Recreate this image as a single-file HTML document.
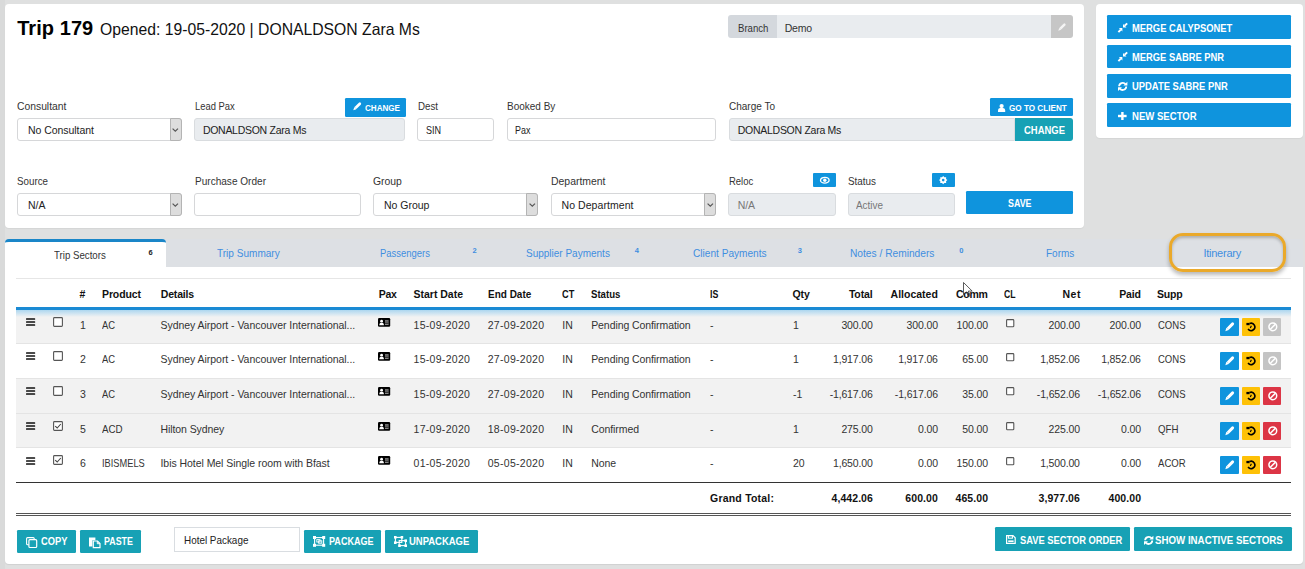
<!DOCTYPE html>
<html><head><meta charset="utf-8">
<style>
html,body{margin:0;padding:0;}
body{width:1305px;height:569px;overflow:hidden;position:relative;background:#dfe0e0;font-family:"Liberation Sans",sans-serif;}
div{position:absolute;}
.t{position:absolute;white-space:nowrap;line-height:1;}
svg{position:absolute;overflow:visible;}
</style></head><body>
<div style="left:0.00px;top:0.00px;width:4.50px;height:569.00px;background:#d9dada"></div>
<div style="left:5.00px;top:4.00px;width:1079.20px;height:223.60px;background:#fff;border-radius:4px;box-shadow:0 1px 1px rgba(0,0,0,.05)"></div>
<div style="left:1096.00px;top:4.00px;width:206.60px;height:133.80px;background:#fff;border-radius:4px;box-shadow:0 1px 1px rgba(0,0,0,.05)"></div>
<div style="left:5.00px;top:239.00px;width:1298.00px;height:28.00px;background:#dde0e4"></div>
<div style="left:5.00px;top:266.50px;width:1298.00px;height:297.30px;background:#fff;border-radius:0 0 4px 4px;box-shadow:0 1px 1px rgba(0,0,0,.07)"></div>
<div style="left:5.00px;top:239.00px;width:161.00px;height:28.00px;background:#fff;border-top:3px solid #1a86c8;border-radius:4px 4px 0 0;box-sizing:border-box"></div>
<span class="t" style="left:17.20px;top:18.07px;font-size:20px;font-weight:bold;color:#000;letter-spacing:0.057px;">Trip 179</span>
<span class="t" style="left:99.70px;top:21.03px;font-size:16.5px;font-weight:normal;color:#111;transform:scaleX(0.9536);transform-origin:0 0;">Opened: 19-05-2020 | DONALDSON Zara Ms</span>
<div style="left:728.30px;top:15.20px;width:48.30px;height:23.10px;background:#d4d8dd;border-radius:3px 0 0 3px"></div>
<div style="left:776.60px;top:15.20px;width:274.00px;height:23.10px;background:#e9ecef"></div>
<div style="left:1050.60px;top:15.20px;width:22.10px;height:23.10px;background:#c6c6c6;border-radius:0 3px 3px 0"></div>
<span class="t" style="left:737.90px;top:22.51px;font-size:10.5px;font-weight:normal;color:#333;transform:scaleX(0.9133);transform-origin:0 0;">Branch</span>
<span class="t" style="left:784.80px;top:22.51px;font-size:10.5px;font-weight:normal;color:#333;letter-spacing:-0.278px;">Demo</span>
<span class="t" style="left:16.60px;top:100.89px;font-size:11px;font-weight:normal;color:#333;transform:scaleX(0.9395);transform-origin:0 0;">Consultant</span>
<div style="left:16.60px;top:118.00px;width:165.90px;height:23.20px;background:#fff;border:1px solid #d6d7d9;border-radius:3px;box-sizing:border-box"></div>
<div style="left:169.60px;top:118.00px;width:12.90px;height:23.20px;background:#dddddd;border:1px solid #b4b4b4;border-radius:0 3px 3px 0;box-sizing:border-box"></div>
<span class="t" style="left:28.00px;top:124.91px;font-size:10.5px;font-weight:normal;color:#222;letter-spacing:-0.051px;">No Consultant</span>
<span class="t" style="left:194.80px;top:100.89px;font-size:11px;font-weight:normal;color:#333;transform:scaleX(0.8542);transform-origin:0 0;">Lead Pax</span>
<div style="left:345.30px;top:97.50px;width:60.50px;height:19.10px;background:#0f94dd;border-radius:1.3px"></div>
<span class="t" style="left:364.60px;top:103.68px;font-size:9px;font-weight:bold;color:#fff;transform:scaleX(0.8971);transform-origin:0 0;">CHANGE</span>
<div style="left:194.00px;top:118.00px;width:211.40px;height:23.20px;background:#e9ecef;border:1px solid #d9dcdf;border-radius:3px;box-sizing:border-box"></div>
<span class="t" style="left:202.90px;top:124.91px;font-size:10.5px;font-weight:normal;color:#222;letter-spacing:-0.278px;">DONALDSON Zara Ms</span>
<span class="t" style="left:417.70px;top:100.89px;font-size:11px;font-weight:normal;color:#333;transform:scaleX(0.8848);transform-origin:0 0;">Dest</span>
<div style="left:417.40px;top:118.30px;width:77.10px;height:22.80px;background:#fff;border:1px solid #d6d7d9;border-radius:3px;box-sizing:border-box"></div>
<span class="t" style="left:425.60px;top:124.91px;font-size:10.5px;font-weight:normal;color:#222;transform:scaleX(0.8580);transform-origin:0 0;">SIN</span>
<span class="t" style="left:506.60px;top:100.89px;font-size:11px;font-weight:normal;color:#333;transform:scaleX(0.9082);transform-origin:0 0;">Booked By</span>
<div style="left:506.60px;top:118.00px;width:209.40px;height:23.20px;background:#fff;border:1px solid #d6d7d9;border-radius:3px;box-sizing:border-box"></div>
<span class="t" style="left:514.80px;top:124.91px;font-size:10.5px;font-weight:normal;color:#222;transform:scaleX(0.8502);transform-origin:0 0;">Pax</span>
<span class="t" style="left:728.50px;top:100.89px;font-size:11px;font-weight:normal;color:#333;transform:scaleX(0.9101);transform-origin:0 0;">Charge To</span>
<div style="left:989.50px;top:97.70px;width:83.50px;height:18.60px;background:#0f94dd;border-radius:1.3px"></div>
<span class="t" style="left:1009.00px;top:103.68px;font-size:9px;font-weight:bold;color:#fff;transform:scaleX(0.9052);transform-origin:0 0;">GO TO CLIENT</span>
<div style="left:728.50px;top:118.00px;width:286.50px;height:23.20px;background:#e9ecef;border:1px solid #d9dcdf;border-radius:3px;box-sizing:border-box;border-radius:3px 0 0 3px"></div>
<div style="left:1014.80px;top:118.00px;width:58.20px;height:23.20px;background:#17a1b5;border-radius:0 3px 3px 0"></div>
<span class="t" style="left:737.80px;top:124.91px;font-size:10.5px;font-weight:normal;color:#222;letter-spacing:-0.277px;">DONALDSON Zara Ms</span>
<span class="t" style="left:1023.50px;top:126.37px;font-size:10.2px;font-weight:bold;color:#fff;transform:scaleX(0.9272);transform-origin:0 0;">CHANGE</span>
<span class="t" style="left:16.60px;top:175.99px;font-size:11px;font-weight:normal;color:#333;transform:scaleX(0.8890);transform-origin:0 0;">Source</span>
<div style="left:16.60px;top:193.00px;width:165.90px;height:23.40px;background:#fff;border:1px solid #d6d7d9;border-radius:3px;box-sizing:border-box"></div>
<div style="left:169.60px;top:193.00px;width:12.90px;height:23.40px;background:#dddddd;border:1px solid #b4b4b4;border-radius:0 3px 3px 0;box-sizing:border-box"></div>
<span class="t" style="left:28.00px;top:199.91px;font-size:10.5px;font-weight:normal;color:#222;letter-spacing:-0.018px;">N/A</span>
<span class="t" style="left:194.80px;top:175.99px;font-size:11px;font-weight:normal;color:#333;transform:scaleX(0.9142);transform-origin:0 0;">Purchase Order</span>
<div style="left:194.00px;top:193.00px;width:166.80px;height:23.40px;background:#fff;border:1px solid #d6d7d9;border-radius:3px;box-sizing:border-box"></div>
<span class="t" style="left:372.90px;top:175.99px;font-size:11px;font-weight:normal;color:#333;transform:scaleX(0.9451);transform-origin:0 0;">Group</span>
<div style="left:373.30px;top:193.00px;width:165.10px;height:23.40px;background:#fff;border:1px solid #d6d7d9;border-radius:3px;box-sizing:border-box"></div>
<div style="left:526.30px;top:193.00px;width:12.10px;height:23.40px;background:#dddddd;border:1px solid #b4b4b4;border-radius:0 3px 3px 0;box-sizing:border-box"></div>
<span class="t" style="left:384.00px;top:199.91px;font-size:10.5px;font-weight:normal;color:#222;letter-spacing:-0.017px;">No Group</span>
<span class="t" style="left:551.00px;top:175.99px;font-size:11px;font-weight:normal;color:#333;transform:scaleX(0.9482);transform-origin:0 0;">Department</span>
<div style="left:551.00px;top:193.00px;width:165.00px;height:23.40px;background:#fff;border:1px solid #d6d7d9;border-radius:3px;box-sizing:border-box"></div>
<div style="left:703.50px;top:193.00px;width:12.50px;height:23.40px;background:#dddddd;border:1px solid #b4b4b4;border-radius:0 3px 3px 0;box-sizing:border-box"></div>
<span class="t" style="left:561.50px;top:199.91px;font-size:10.5px;font-weight:normal;color:#222;letter-spacing:0.068px;">No Department</span>
<span class="t" style="left:728.50px;top:175.99px;font-size:11px;font-weight:normal;color:#333;transform:scaleX(0.8611);transform-origin:0 0;">Reloc</span>
<div style="left:813.00px;top:172.80px;width:22.80px;height:13.90px;background:#0f94dd;border-radius:1px"></div>
<div style="left:728.20px;top:193.00px;width:107.50px;height:23.40px;background:#e9ecef;border:1px solid #d9dcdf;border-radius:3px;box-sizing:border-box"></div>
<span class="t" style="left:737.70px;top:199.91px;font-size:10.5px;font-weight:normal;color:#777;letter-spacing:-0.118px;">N/A</span>
<span class="t" style="left:847.80px;top:175.99px;font-size:11px;font-weight:normal;color:#333;transform:scaleX(0.8979);transform-origin:0 0;">Status</span>
<div style="left:932.00px;top:172.80px;width:22.50px;height:14.10px;background:#0f94dd;border-radius:1px"></div>
<div style="left:847.50px;top:193.00px;width:107.00px;height:23.40px;background:#e9ecef;border:1px solid #d9dcdf;border-radius:3px;box-sizing:border-box"></div>
<span class="t" style="left:856.00px;top:199.91px;font-size:10.5px;font-weight:normal;color:#777;transform:scaleX(0.9436);transform-origin:0 0;">Active</span>
<div style="left:966.20px;top:190.70px;width:106.80px;height:23.10px;background:#0f94dd;border-radius:1.3px"></div>
<span class="t" style="left:1007.50px;top:198.98px;font-size:10.3px;font-weight:bold;color:#fff;transform:scaleX(0.8610);transform-origin:0 0;">SAVE</span>
<div style="left:1107.20px;top:15.10px;width:184.00px;height:23.80px;background:#0f94dd;border-radius:1.3px"></div>
<span class="t" style="left:1132.00px;top:22.71px;font-size:10.5px;font-weight:bold;color:#fff;transform:scaleX(0.8940);transform-origin:0 0;">MERGE CALYPSONET</span>
<div style="left:1107.20px;top:44.60px;width:184.00px;height:23.80px;background:#0f94dd;border-radius:1.3px"></div>
<span class="t" style="left:1132.00px;top:52.01px;font-size:10.5px;font-weight:bold;color:#fff;transform:scaleX(0.8909);transform-origin:0 0;">MERGE SABRE PNR</span>
<div style="left:1107.20px;top:74.00px;width:184.00px;height:23.80px;background:#0f94dd;border-radius:1.3px"></div>
<span class="t" style="left:1132.00px;top:81.01px;font-size:10.5px;font-weight:bold;color:#fff;transform:scaleX(0.8941);transform-origin:0 0;">UPDATE SABRE PNR</span>
<div style="left:1107.20px;top:103.40px;width:184.00px;height:23.80px;background:#0f94dd;border-radius:1.3px"></div>
<span class="t" style="left:1132.00px;top:110.71px;font-size:10.5px;font-weight:bold;color:#fff;transform:scaleX(0.9115);transform-origin:0 0;">NEW SECTOR</span>
<span class="t" style="left:54.30px;top:249.69px;font-size:11px;font-weight:normal;color:#333;transform:scaleX(0.8794);transform-origin:0 0;">Trip Sectors</span>
<span class="t" style="left:148.60px;top:248.65px;font-size:7.5px;font-weight:bold;color:#222;letter-spacing:0.000px;">6</span>
<span class="t" style="left:217.30px;top:247.89px;font-size:11px;font-weight:normal;color:#3f8ee0;transform:scaleX(0.9135);transform-origin:0 0;">Trip Summary</span>
<span class="t" style="left:380.20px;top:247.89px;font-size:11px;font-weight:normal;color:#3f8ee0;transform:scaleX(0.8592);transform-origin:0 0;">Passengers</span>
<span class="t" style="left:472.60px;top:247.05px;font-size:7.5px;font-weight:bold;color:#3f8ee0;letter-spacing:0.000px;">2</span>
<span class="t" style="left:525.50px;top:247.89px;font-size:11px;font-weight:normal;color:#3f8ee0;transform:scaleX(0.9085);transform-origin:0 0;">Supplier Payments</span>
<span class="t" style="left:634.70px;top:247.05px;font-size:7.5px;font-weight:bold;color:#3f8ee0;letter-spacing:0.000px;">4</span>
<span class="t" style="left:693.30px;top:247.89px;font-size:11px;font-weight:normal;color:#3f8ee0;transform:scaleX(0.9191);transform-origin:0 0;">Client Payments</span>
<span class="t" style="left:797.70px;top:247.05px;font-size:7.5px;font-weight:bold;color:#3f8ee0;letter-spacing:0.000px;">3</span>
<span class="t" style="left:850.10px;top:247.89px;font-size:11px;font-weight:normal;color:#3f8ee0;transform:scaleX(0.9267);transform-origin:0 0;">Notes / Reminders</span>
<span class="t" style="left:959.30px;top:247.05px;font-size:7.5px;font-weight:bold;color:#3f8ee0;letter-spacing:0.000px;">0</span>
<span class="t" style="left:1045.70px;top:247.89px;font-size:11px;font-weight:normal;color:#3f8ee0;transform:scaleX(0.9075);transform-origin:0 0;">Forms</span>
<span class="t" style="left:1203.40px;top:247.89px;font-size:11px;font-weight:normal;color:#3f8ee0;letter-spacing:-0.239px;">Itinerary</span>
<div style="left:1169.00px;top:232.80px;width:117.20px;height:39.20px;border:3.4px solid #eaa92a;border-radius:14px;box-sizing:border-box;box-shadow:0 3px 4px rgba(0,0,0,.28), inset 0 2px 3px rgba(0,0,0,.22)"></div>
<div style="left:16.20px;top:278.00px;width:1275.30px;height:1.00px;background:#e6e6e6"></div>
<span class="t" style="left:79.50px;top:288.91px;font-size:10.5px;font-weight:bold;color:#111;letter-spacing:0.000px;">#</span>
<span class="t" style="left:102.00px;top:288.91px;font-size:10.5px;font-weight:bold;color:#111;letter-spacing:-0.115px;">Product</span>
<span class="t" style="left:160.80px;top:288.91px;font-size:10.5px;font-weight:bold;color:#111;letter-spacing:-0.173px;">Details</span>
<span class="t" style="left:378.70px;top:288.91px;font-size:10.5px;font-weight:bold;color:#111;letter-spacing:-0.295px;">Pax</span>
<span class="t" style="left:413.60px;top:288.91px;font-size:10.5px;font-weight:bold;color:#111;letter-spacing:-0.024px;">Start Date</span>
<span class="t" style="left:488.00px;top:288.91px;font-size:10.5px;font-weight:bold;color:#111;transform:scaleX(0.9513);transform-origin:0 0;">End Date</span>
<span class="t" style="left:561.80px;top:288.91px;font-size:10.5px;font-weight:bold;color:#111;transform:scaleX(0.8775);transform-origin:0 0;">CT</span>
<span class="t" style="left:591.40px;top:288.91px;font-size:10.5px;font-weight:bold;color:#111;transform:scaleX(0.9165);transform-origin:0 0;">Status</span>
<span class="t" style="left:709.90px;top:288.91px;font-size:10.5px;font-weight:bold;color:#111;transform:scaleX(0.8365);transform-origin:0 0;">IS</span>
<span class="t" style="left:792.50px;top:288.91px;font-size:10.5px;font-weight:bold;color:#111;letter-spacing:-0.091px;">Qty</span>
<span class="t" style="left:1003.70px;top:288.91px;font-size:10.5px;font-weight:bold;color:#111;transform:scaleX(0.8275);transform-origin:0 0;">CL</span>
<span class="t" style="left:1157.10px;top:288.91px;font-size:10.5px;font-weight:bold;color:#111;letter-spacing:-0.250px;">Supp</span>
<span class="t" style="left:848.90px;top:288.91px;font-size:10.5px;font-weight:bold;color:#111;letter-spacing:-0.152px;">Total</span>
<span class="t" style="left:890.60px;top:288.91px;font-size:10.5px;font-weight:bold;color:#111;letter-spacing:-0.006px;">Allocated</span>
<span class="t" style="left:956.00px;top:288.91px;font-size:10.5px;font-weight:bold;color:#111;letter-spacing:-0.285px;">Comm</span>
<span class="t" style="left:1062.50px;top:288.91px;font-size:10.5px;font-weight:bold;color:#111;letter-spacing:0.497px;">Net</span>
<span class="t" style="left:1119.30px;top:288.91px;font-size:10.5px;font-weight:bold;color:#111;letter-spacing:-0.218px;">Paid</span>
<div style="left:16.20px;top:310.00px;width:1275.30px;height:33.40px;background:#f2f2f2"></div>
<div style="left:16.20px;top:343.40px;width:1275.30px;height:34.60px;background:#fff"></div>
<div style="left:16.20px;top:378.00px;width:1275.30px;height:35.10px;background:#f2f2f2"></div>
<div style="left:16.20px;top:413.10px;width:1275.30px;height:34.50px;background:#f2f2f2"></div>
<div style="left:16.20px;top:447.60px;width:1275.30px;height:34.40px;background:#fff"></div>
<div style="left:16.20px;top:342.90px;width:1275.30px;height:1.00px;background:#e4e4e4"></div>
<div style="left:16.20px;top:377.50px;width:1275.30px;height:1.00px;background:#e4e4e4"></div>
<div style="left:16.20px;top:412.60px;width:1275.30px;height:1.00px;background:#e4e4e4"></div>
<div style="left:16.20px;top:447.10px;width:1275.30px;height:1.00px;background:#e4e4e4"></div>
<div style="left:16.20px;top:307.20px;width:1275.30px;height:2.80px;background:#1a8ad4"></div>
<div style="left:16.20px;top:310.00px;width:1275.30px;height:7.00px;background:linear-gradient(rgba(60,170,235,0.38),rgba(60,170,235,0))"></div>
<span class="t" style="left:80.00px;top:319.61px;font-size:10.5px;font-weight:normal;color:#333;letter-spacing:0.000px;">1</span>
<span class="t" style="left:101.50px;top:319.61px;font-size:10.5px;font-weight:normal;color:#333;transform:scaleX(0.8976);transform-origin:0 0;">AC</span>
<span class="t" style="left:160.50px;top:319.61px;font-size:10.5px;font-weight:normal;color:#333;letter-spacing:-0.041px;">Sydney Airport - Vancouver International...</span>
<span class="t" style="left:413.50px;top:319.61px;font-size:10.5px;font-weight:normal;color:#333;letter-spacing:0.299px;">15-09-2020</span>
<span class="t" style="left:487.70px;top:319.61px;font-size:10.5px;font-weight:normal;color:#333;letter-spacing:0.299px;">27-09-2020</span>
<span class="t" style="left:562.30px;top:319.61px;font-size:10.5px;font-weight:normal;color:#333;letter-spacing:0.000px;">IN</span>
<span class="t" style="left:591.20px;top:319.61px;font-size:10.5px;font-weight:normal;color:#333;letter-spacing:-0.080px;">Pending Confirmation</span>
<span class="t" style="left:710.00px;top:319.61px;font-size:10.5px;font-weight:normal;color:#333;letter-spacing:0.000px;">-</span>
<span class="t" style="left:792.90px;top:319.61px;font-size:10.5px;font-weight:normal;color:#333;letter-spacing:0.000px;">1</span>
<span class="t" style="left:841.42px;top:319.61px;font-size:10.5px;font-weight:normal;color:#333;letter-spacing:-0.150px;">300.00</span>
<span class="t" style="left:906.62px;top:319.61px;font-size:10.5px;font-weight:normal;color:#333;letter-spacing:-0.150px;">300.00</span>
<span class="t" style="left:956.62px;top:319.61px;font-size:10.5px;font-weight:normal;color:#333;letter-spacing:-0.150px;">100.00</span>
<span class="t" style="left:1048.62px;top:319.61px;font-size:10.5px;font-weight:normal;color:#333;letter-spacing:-0.150px;">200.00</span>
<span class="t" style="left:1109.62px;top:319.61px;font-size:10.5px;font-weight:normal;color:#333;letter-spacing:-0.150px;">200.00</span>
<span class="t" style="left:1157.50px;top:319.61px;font-size:10.5px;font-weight:normal;color:#333;transform:scaleX(0.9062);transform-origin:0 0;">CONS</span>
<div style="left:1219.90px;top:318.00px;width:18.90px;height:18.30px;background:#0f94dd;border-radius:1px"></div>
<div style="left:1241.50px;top:318.00px;width:18.90px;height:18.30px;background:#fec107;border-radius:1px"></div>
<div style="left:1262.70px;top:318.00px;width:18.70px;height:18.30px;background:#c4c4c4;border-radius:1px"></div>
<span class="t" style="left:80.00px;top:354.41px;font-size:10.5px;font-weight:normal;color:#333;letter-spacing:0.000px;">2</span>
<span class="t" style="left:101.50px;top:354.41px;font-size:10.5px;font-weight:normal;color:#333;transform:scaleX(0.8976);transform-origin:0 0;">AC</span>
<span class="t" style="left:160.50px;top:354.41px;font-size:10.5px;font-weight:normal;color:#333;letter-spacing:-0.041px;">Sydney Airport - Vancouver International...</span>
<span class="t" style="left:413.50px;top:354.41px;font-size:10.5px;font-weight:normal;color:#333;letter-spacing:0.299px;">15-09-2020</span>
<span class="t" style="left:487.70px;top:354.41px;font-size:10.5px;font-weight:normal;color:#333;letter-spacing:0.299px;">27-09-2020</span>
<span class="t" style="left:562.30px;top:354.41px;font-size:10.5px;font-weight:normal;color:#333;letter-spacing:0.000px;">IN</span>
<span class="t" style="left:591.20px;top:354.41px;font-size:10.5px;font-weight:normal;color:#333;letter-spacing:-0.080px;">Pending Confirmation</span>
<span class="t" style="left:710.00px;top:354.41px;font-size:10.5px;font-weight:normal;color:#333;letter-spacing:0.000px;">-</span>
<span class="t" style="left:792.90px;top:354.41px;font-size:10.5px;font-weight:normal;color:#333;letter-spacing:0.000px;">1</span>
<span class="t" style="left:832.95px;top:354.41px;font-size:10.5px;font-weight:normal;color:#333;letter-spacing:-0.150px;">1,917.06</span>
<span class="t" style="left:898.15px;top:354.41px;font-size:10.5px;font-weight:normal;color:#333;letter-spacing:-0.150px;">1,917.06</span>
<span class="t" style="left:962.30px;top:354.41px;font-size:10.5px;font-weight:normal;color:#333;letter-spacing:-0.150px;">65.00</span>
<span class="t" style="left:1040.15px;top:354.41px;font-size:10.5px;font-weight:normal;color:#333;letter-spacing:-0.150px;">1,852.06</span>
<span class="t" style="left:1101.15px;top:354.41px;font-size:10.5px;font-weight:normal;color:#333;letter-spacing:-0.150px;">1,852.06</span>
<span class="t" style="left:1157.50px;top:354.41px;font-size:10.5px;font-weight:normal;color:#333;transform:scaleX(0.9062);transform-origin:0 0;">CONS</span>
<div style="left:1219.90px;top:352.00px;width:18.90px;height:18.30px;background:#0f94dd;border-radius:1px"></div>
<div style="left:1241.50px;top:352.00px;width:18.90px;height:18.30px;background:#fec107;border-radius:1px"></div>
<div style="left:1262.70px;top:352.00px;width:18.70px;height:18.30px;background:#c4c4c4;border-radius:1px"></div>
<span class="t" style="left:80.00px;top:389.11px;font-size:10.5px;font-weight:normal;color:#333;letter-spacing:0.000px;">3</span>
<span class="t" style="left:101.50px;top:389.11px;font-size:10.5px;font-weight:normal;color:#333;transform:scaleX(0.8976);transform-origin:0 0;">AC</span>
<span class="t" style="left:160.50px;top:389.11px;font-size:10.5px;font-weight:normal;color:#333;letter-spacing:-0.041px;">Sydney Airport - Vancouver International...</span>
<span class="t" style="left:413.50px;top:389.11px;font-size:10.5px;font-weight:normal;color:#333;letter-spacing:0.299px;">15-09-2020</span>
<span class="t" style="left:487.70px;top:389.11px;font-size:10.5px;font-weight:normal;color:#333;letter-spacing:0.299px;">27-09-2020</span>
<span class="t" style="left:562.30px;top:389.11px;font-size:10.5px;font-weight:normal;color:#333;letter-spacing:0.000px;">IN</span>
<span class="t" style="left:591.20px;top:389.11px;font-size:10.5px;font-weight:normal;color:#333;letter-spacing:-0.080px;">Pending Confirmation</span>
<span class="t" style="left:710.00px;top:389.11px;font-size:10.5px;font-weight:normal;color:#333;letter-spacing:0.000px;">-</span>
<span class="t" style="left:792.90px;top:389.11px;font-size:10.5px;font-weight:normal;color:#333;letter-spacing:0.000px;">-1</span>
<span class="t" style="left:829.64px;top:389.11px;font-size:10.5px;font-weight:normal;color:#333;letter-spacing:-0.150px;">-1,617.06</span>
<span class="t" style="left:894.84px;top:389.11px;font-size:10.5px;font-weight:normal;color:#333;letter-spacing:-0.150px;">-1,617.06</span>
<span class="t" style="left:962.30px;top:389.11px;font-size:10.5px;font-weight:normal;color:#333;letter-spacing:-0.150px;">35.00</span>
<span class="t" style="left:1036.84px;top:389.11px;font-size:10.5px;font-weight:normal;color:#333;letter-spacing:-0.150px;">-1,652.06</span>
<span class="t" style="left:1097.84px;top:389.11px;font-size:10.5px;font-weight:normal;color:#333;letter-spacing:-0.150px;">-1,652.06</span>
<span class="t" style="left:1157.50px;top:389.11px;font-size:10.5px;font-weight:normal;color:#333;transform:scaleX(0.9062);transform-origin:0 0;">CONS</span>
<div style="left:1219.90px;top:386.85px;width:18.90px;height:18.30px;background:#0f94dd;border-radius:1px"></div>
<div style="left:1241.50px;top:386.85px;width:18.90px;height:18.30px;background:#fec107;border-radius:1px"></div>
<div style="left:1262.70px;top:386.85px;width:18.70px;height:18.30px;background:#dc3545;border-radius:1px"></div>
<span class="t" style="left:80.00px;top:424.11px;font-size:10.5px;font-weight:normal;color:#333;letter-spacing:0.000px;">5</span>
<span class="t" style="left:101.50px;top:424.11px;font-size:10.5px;font-weight:normal;color:#333;transform:scaleX(0.9298);transform-origin:0 0;">ACD</span>
<span class="t" style="left:160.50px;top:424.11px;font-size:10.5px;font-weight:normal;color:#333;letter-spacing:-0.090px;">Hilton Sydney</span>
<span class="t" style="left:413.50px;top:424.11px;font-size:10.5px;font-weight:normal;color:#333;letter-spacing:0.299px;">17-09-2020</span>
<span class="t" style="left:487.70px;top:424.11px;font-size:10.5px;font-weight:normal;color:#333;letter-spacing:0.299px;">18-09-2020</span>
<span class="t" style="left:562.30px;top:424.11px;font-size:10.5px;font-weight:normal;color:#333;letter-spacing:0.000px;">IN</span>
<span class="t" style="left:591.20px;top:424.11px;font-size:10.5px;font-weight:normal;color:#333;letter-spacing:-0.080px;">Confirmed</span>
<span class="t" style="left:710.00px;top:424.11px;font-size:10.5px;font-weight:normal;color:#333;letter-spacing:0.000px;">-</span>
<span class="t" style="left:792.90px;top:424.11px;font-size:10.5px;font-weight:normal;color:#333;letter-spacing:0.000px;">1</span>
<span class="t" style="left:841.42px;top:424.11px;font-size:10.5px;font-weight:normal;color:#333;letter-spacing:-0.150px;">275.00</span>
<span class="t" style="left:918.03px;top:424.11px;font-size:10.5px;font-weight:normal;color:#333;letter-spacing:-0.150px;">0.00</span>
<span class="t" style="left:962.30px;top:424.11px;font-size:10.5px;font-weight:normal;color:#333;letter-spacing:-0.150px;">50.00</span>
<span class="t" style="left:1048.62px;top:424.11px;font-size:10.5px;font-weight:normal;color:#333;letter-spacing:-0.150px;">225.00</span>
<span class="t" style="left:1121.03px;top:424.11px;font-size:10.5px;font-weight:normal;color:#333;letter-spacing:-0.150px;">0.00</span>
<span class="t" style="left:1157.50px;top:424.11px;font-size:10.5px;font-weight:normal;color:#333;transform:scaleX(0.9208);transform-origin:0 0;">QFH</span>
<div style="left:1219.90px;top:421.65px;width:18.90px;height:18.30px;background:#0f94dd;border-radius:1px"></div>
<div style="left:1241.50px;top:421.65px;width:18.90px;height:18.30px;background:#fec107;border-radius:1px"></div>
<div style="left:1262.70px;top:421.65px;width:18.70px;height:18.30px;background:#dc3545;border-radius:1px"></div>
<span class="t" style="left:80.00px;top:458.41px;font-size:10.5px;font-weight:normal;color:#333;letter-spacing:0.000px;">6</span>
<span class="t" style="left:101.50px;top:458.41px;font-size:10.5px;font-weight:normal;color:#333;transform:scaleX(0.8832);transform-origin:0 0;">IBISMELS</span>
<span class="t" style="left:160.50px;top:458.41px;font-size:10.5px;font-weight:normal;color:#333;letter-spacing:-0.050px;">Ibis Hotel Mel Single room with Bfast</span>
<span class="t" style="left:413.50px;top:458.41px;font-size:10.5px;font-weight:normal;color:#333;letter-spacing:0.299px;">01-05-2020</span>
<span class="t" style="left:487.70px;top:458.41px;font-size:10.5px;font-weight:normal;color:#333;letter-spacing:0.299px;">05-05-2020</span>
<span class="t" style="left:562.30px;top:458.41px;font-size:10.5px;font-weight:normal;color:#333;letter-spacing:0.000px;">IN</span>
<span class="t" style="left:591.20px;top:458.41px;font-size:10.5px;font-weight:normal;color:#333;letter-spacing:-0.080px;">None</span>
<span class="t" style="left:710.00px;top:458.41px;font-size:10.5px;font-weight:normal;color:#333;letter-spacing:0.000px;">-</span>
<span class="t" style="left:792.90px;top:458.41px;font-size:10.5px;font-weight:normal;color:#333;letter-spacing:0.000px;">20</span>
<span class="t" style="left:832.95px;top:458.41px;font-size:10.5px;font-weight:normal;color:#333;letter-spacing:-0.150px;">1,650.00</span>
<span class="t" style="left:918.03px;top:458.41px;font-size:10.5px;font-weight:normal;color:#333;letter-spacing:-0.150px;">0.00</span>
<span class="t" style="left:956.62px;top:458.41px;font-size:10.5px;font-weight:normal;color:#333;letter-spacing:-0.150px;">150.00</span>
<span class="t" style="left:1040.15px;top:458.41px;font-size:10.5px;font-weight:normal;color:#333;letter-spacing:-0.150px;">1,500.00</span>
<span class="t" style="left:1121.03px;top:458.41px;font-size:10.5px;font-weight:normal;color:#333;letter-spacing:-0.150px;">0.00</span>
<span class="t" style="left:1157.50px;top:458.41px;font-size:10.5px;font-weight:normal;color:#333;transform:scaleX(0.9128);transform-origin:0 0;">ACOR</span>
<div style="left:1219.90px;top:456.10px;width:18.90px;height:18.30px;background:#0f94dd;border-radius:1px"></div>
<div style="left:1241.50px;top:456.10px;width:18.90px;height:18.30px;background:#fec107;border-radius:1px"></div>
<div style="left:1262.70px;top:456.10px;width:18.70px;height:18.30px;background:#dc3545;border-radius:1px"></div>
<div style="left:16.20px;top:481.50px;width:1275.30px;height:1.50px;background:#333"></div>
<span class="t" style="left:710.00px;top:492.51px;font-size:10.5px;font-weight:bold;color:#111;letter-spacing:0.215px;">Grand Total:</span>
<span class="t" style="left:831.51px;top:492.51px;font-size:10.5px;font-weight:bold;color:#111;letter-spacing:0.070px;">4,442.06</span>
<span class="t" style="left:905.32px;top:492.51px;font-size:10.5px;font-weight:bold;color:#111;letter-spacing:0.070px;">600.00</span>
<span class="t" style="left:955.52px;top:492.51px;font-size:10.5px;font-weight:bold;color:#111;letter-spacing:0.070px;">465.00</span>
<span class="t" style="left:1038.51px;top:492.51px;font-size:10.5px;font-weight:bold;color:#111;letter-spacing:0.070px;">3,977.06</span>
<span class="t" style="left:1108.52px;top:492.51px;font-size:10.5px;font-weight:bold;color:#111;letter-spacing:0.070px;">400.00</span>
<div style="left:16.20px;top:512.50px;width:1275.30px;height:1.00px;background:#555"></div>
<div style="left:16.20px;top:514.80px;width:1275.30px;height:1.20px;background:#555"></div>
<div style="left:16.80px;top:529.50px;width:59.20px;height:23.10px;background:#17a1b5;border-radius:1.3px"></div>
<div style="left:80.00px;top:529.50px;width:60.70px;height:23.10px;background:#17a1b5;border-radius:1.3px"></div>
<div style="left:303.80px;top:529.50px;width:77.70px;height:23.10px;background:#17a1b5;border-radius:1.3px"></div>
<div style="left:385.00px;top:529.50px;width:92.80px;height:23.10px;background:#17a1b5;border-radius:1.3px"></div>
<div style="left:174.40px;top:527.30px;width:126.00px;height:24.90px;background:#fff;border:1px solid #d9dde1;box-sizing:border-box"></div>
<span class="t" style="left:184.40px;top:534.91px;font-size:10.5px;font-weight:normal;color:#222;transform:scaleX(0.9429);transform-origin:0 0;">Hotel Package</span>
<span class="t" style="left:40.90px;top:536.68px;font-size:10.3px;font-weight:bold;color:#fff;transform:scaleX(0.9041);transform-origin:0 0;">COPY</span>
<span class="t" style="left:103.60px;top:536.68px;font-size:10.3px;font-weight:bold;color:#fff;transform:scaleX(0.8607);transform-origin:0 0;">PASTE</span>
<span class="t" style="left:328.80px;top:536.58px;font-size:10.3px;font-weight:bold;color:#fff;transform:scaleX(0.8772);transform-origin:0 0;">PACKAGE</span>
<span class="t" style="left:409.10px;top:536.58px;font-size:10.3px;font-weight:bold;color:#fff;transform:scaleX(0.9175);transform-origin:0 0;">UNPACKAGE</span>
<div style="left:995.30px;top:527.30px;width:134.60px;height:23.30px;background:#17a1b5;border-radius:1.3px"></div>
<div style="left:1133.50px;top:527.30px;width:158.10px;height:23.30px;background:#17a1b5;border-radius:1.3px"></div>
<span class="t" style="left:1019.50px;top:535.11px;font-size:10.5px;font-weight:bold;color:#fff;transform:scaleX(0.8885);transform-origin:0 0;">SAVE SECTOR ORDER</span>
<span class="t" style="left:1155.30px;top:535.01px;font-size:10.5px;font-weight:bold;color:#fff;transform:scaleX(0.9249);transform-origin:0 0;">SHOW INACTIVE SECTORS</span>
<svg style="left:352.50px;top:102.20px" width="9.5" height="9.5" viewBox="0 0 9.5 9.5"><g transform="scale(0.85)"><path d="M3.2,6.8 L8.0,2.0" stroke="#fff" stroke-width="3.1" stroke-linecap="round"/><path d="M0.3,9.7 L1.55,6.15 L3.85,8.45 Z" fill="#fff"/><path d="M1.9,6.0 L4.0,8.1" stroke="#1492dc" stroke-width="0.35" opacity="0.7"/></g></svg>
<svg style="left:1057.50px;top:22.50px" width="9.0" height="9.0" viewBox="0 0 9.0 9.0"><g transform="scale(0.8)"><path d="M3.2,6.8 L8.0,2.0" stroke="#f4f4f4" stroke-width="3.1" stroke-linecap="round"/><path d="M0.3,9.7 L1.55,6.15 L3.85,8.45 Z" fill="#f4f4f4"/><path d="M1.9,6.0 L4.0,8.1" stroke="#c6c6c6" stroke-width="0.35" opacity="0.7"/></g></svg>
<svg style="left:997.70px;top:104.00px" width="8" height="8" viewBox="0 0 8 8"><circle cx="3.6" cy="2.1" r="2.1" fill="#fff"/><path d="M0,8 L0,6.6 C0,4.9 1.3,4.1 2.3,4.1 L4.9,4.1 C5.9,4.1 7.2,4.9 7.2,6.6 L7.2,8 Z" fill="#fff"/></svg>
<svg style="left:819.80px;top:176.60px" width="10" height="7" viewBox="0 0 10 7"><ellipse cx="4.8" cy="3.2" rx="4.3" ry="2.9" fill="none" stroke="#fff" stroke-width="1.3"/><circle cx="4.8" cy="3.3" r="1.7" fill="#fff"/></svg>
<svg style="left:938.90px;top:175.60px" width="9" height="9" viewBox="0 0 9 9"><polygon points="4.20,-0.10 5.39,1.24 7.17,1.13 7.06,2.91 8.40,4.10 7.06,5.29 7.17,7.07 5.39,6.96 4.20,8.30 3.01,6.96 1.23,7.07 1.34,5.29 0.00,4.10 1.34,2.91 1.23,1.13 3.01,1.24" fill="#fff"/><circle cx="4.2" cy="4.1" r="1.3" fill="#1492dc"/></svg>
<svg style="left:1117.60px;top:22.60px" width="10" height="10" viewBox="0 0 10 10"><path d="M5.0,4.4 L5.0,0.9 L8.5,4.4 Z" fill="#fff"/><path d="M6.6,2.8 L9.2,0.4" stroke="#fff" stroke-width="1.9"/><path d="M4.4,5.0 L0.9,5.0 L4.4,8.5 Z" fill="#fff"/><path d="M2.8,6.6 L0.4,9.2" stroke="#fff" stroke-width="1.9"/></svg>
<svg style="left:1117.60px;top:52.00px" width="10" height="10" viewBox="0 0 10 10"><path d="M5.0,4.4 L5.0,0.9 L8.5,4.4 Z" fill="#fff"/><path d="M6.6,2.8 L9.2,0.4" stroke="#fff" stroke-width="1.9"/><path d="M4.4,5.0 L0.9,5.0 L4.4,8.5 Z" fill="#fff"/><path d="M2.8,6.6 L0.4,9.2" stroke="#fff" stroke-width="1.9"/></svg>
<svg style="left:1117.50px;top:82.30px" width="10" height="9" viewBox="0 0 10 9"><path d="M1.15,4.3 A3.55,3.35 0 0 1 7.6,2.3" fill="none" stroke="#fff" stroke-width="1.8"/><path d="M5.4,3.6 L9.4,3.6 L9.4,-0.2 Z" fill="#fff"/><path d="M8.25,4.5 A3.55,3.35 0 0 1 1.8,6.5" fill="none" stroke="#fff" stroke-width="1.8"/><path d="M4.0,5.2 L0.0,5.2 L0.0,9.0 Z" fill="#fff"/></svg>
<svg style="left:1118.00px;top:111.90px" width="9" height="8" viewBox="0 0 9 8"><rect x="3.2" y="0" width="2.4" height="8" fill="#fff"/><rect x="0" y="2.8" width="8.6" height="2.4" fill="#fff"/></svg>
<svg style="left:172.10px;top:127.90px" width="7" height="4" viewBox="0 0 7 4"><path d="M0.6,0.6 L3.3,3.2 L6.0,0.6" fill="none" stroke="#555" stroke-width="1.2"/></svg>
<svg style="left:172.10px;top:202.90px" width="7" height="4" viewBox="0 0 7 4"><path d="M0.6,0.6 L3.3,3.2 L6.0,0.6" fill="none" stroke="#555" stroke-width="1.2"/></svg>
<svg style="left:529.00px;top:202.90px" width="7" height="4" viewBox="0 0 7 4"><path d="M0.6,0.6 L3.3,3.2 L6.0,0.6" fill="none" stroke="#555" stroke-width="1.2"/></svg>
<svg style="left:706.50px;top:202.90px" width="7" height="4" viewBox="0 0 7 4"><path d="M0.6,0.6 L3.3,3.2 L6.0,0.6" fill="none" stroke="#555" stroke-width="1.2"/></svg>
<svg style="left:26.00px;top:318.40px" width="9.5" height="8" viewBox="0 0 9.5 8"><rect x="0" y="0.2" width="9.2" height="1.6" rx="0.6" fill="#111"/><rect x="0" y="3.2" width="9.2" height="1.6" rx="0.6" fill="#111"/><rect x="0" y="6.2" width="9.2" height="1.6" rx="0.6" fill="#111"/></svg>
<svg style="left:53.00px;top:317.20px" width="10" height="10" viewBox="0 0 10 10"><rect x="0.6" y="0.6" width="8.80" height="8.80" rx="0.8" fill="#fff" stroke="#555" stroke-width="1.1"/></svg>
<svg style="left:377.90px;top:317.90px" width="12.5" height="9" viewBox="0 0 12.5 9"><rect x="0" y="0" width="12.2" height="8.8" rx="1.2" fill="#000"/><circle cx="3.6" cy="3.2" r="1.4" fill="#fff"/><path d="M1.3,7.2 C1.3,5.4 2.3,4.8 3.6,4.8 C4.9,4.8 5.9,5.4 5.9,7.2 Z" fill="#fff"/><rect x="7.0" y="2.2" width="3.6" height="4.8" fill="#888"/><rect x="7.0" y="3.7" width="3.6" height="0.6" fill="#000"/><rect x="7.0" y="5.2" width="3.6" height="0.6" fill="#000"/></svg>
<svg style="left:1005.80px;top:318.50px" width="8.4" height="8.4" viewBox="0 0 8.4 8.4"><rect x="0.6" y="0.6" width="7.20" height="7.20" rx="0.8" fill="#fff" stroke="#555" stroke-width="1.1"/></svg>
<svg style="left:1224.60px;top:322.20px" width="10.5" height="10.5" viewBox="0 0 10.5 10.5"><g transform="scale(0.95)"><path d="M3.2,6.8 L8.0,2.0" stroke="#fff" stroke-width="3.1" stroke-linecap="round"/><path d="M0.3,9.7 L1.55,6.15 L3.85,8.45 Z" fill="#fff"/><path d="M1.9,6.0 L4.0,8.1" stroke="#1492dc" stroke-width="0.35" opacity="0.7"/></g></svg>
<svg style="left:1246.40px;top:322.30px" width="10" height="10" viewBox="0 0 10 10"><path d="M3.54,1.55 A3.7,3.7 0 1 1 2.07,7.02" fill="none" stroke="#000" stroke-width="1.6"/><rect x="0.4" y="0.9" width="3.2" height="2.3" fill="#000"/><path d="M4.3,6.1 L5.4,3.8" stroke="#000" stroke-width="1.1"/></svg>
<svg style="left:1267.80px;top:322.20px" width="10" height="10" viewBox="0 0 10 10"><circle cx="4.8" cy="4.8" r="3.9" fill="none" stroke="#fff" stroke-width="1.5"/><path d="M2.1,7.5 L7.5,2.1" stroke="#fff" stroke-width="1.5"/></svg>
<svg style="left:26.00px;top:352.40px" width="9.5" height="8" viewBox="0 0 9.5 8"><rect x="0" y="0.2" width="9.2" height="1.6" rx="0.6" fill="#111"/><rect x="0" y="3.2" width="9.2" height="1.6" rx="0.6" fill="#111"/><rect x="0" y="6.2" width="9.2" height="1.6" rx="0.6" fill="#111"/></svg>
<svg style="left:53.00px;top:351.20px" width="10" height="10" viewBox="0 0 10 10"><rect x="0.6" y="0.6" width="8.80" height="8.80" rx="0.8" fill="#fff" stroke="#555" stroke-width="1.1"/></svg>
<svg style="left:377.90px;top:351.90px" width="12.5" height="9" viewBox="0 0 12.5 9"><rect x="0" y="0" width="12.2" height="8.8" rx="1.2" fill="#000"/><circle cx="3.6" cy="3.2" r="1.4" fill="#fff"/><path d="M1.3,7.2 C1.3,5.4 2.3,4.8 3.6,4.8 C4.9,4.8 5.9,5.4 5.9,7.2 Z" fill="#fff"/><rect x="7.0" y="2.2" width="3.6" height="4.8" fill="#888"/><rect x="7.0" y="3.7" width="3.6" height="0.6" fill="#000"/><rect x="7.0" y="5.2" width="3.6" height="0.6" fill="#000"/></svg>
<svg style="left:1005.80px;top:352.50px" width="8.4" height="8.4" viewBox="0 0 8.4 8.4"><rect x="0.6" y="0.6" width="7.20" height="7.20" rx="0.8" fill="#fff" stroke="#555" stroke-width="1.1"/></svg>
<svg style="left:1224.60px;top:356.20px" width="10.5" height="10.5" viewBox="0 0 10.5 10.5"><g transform="scale(0.95)"><path d="M3.2,6.8 L8.0,2.0" stroke="#fff" stroke-width="3.1" stroke-linecap="round"/><path d="M0.3,9.7 L1.55,6.15 L3.85,8.45 Z" fill="#fff"/><path d="M1.9,6.0 L4.0,8.1" stroke="#1492dc" stroke-width="0.35" opacity="0.7"/></g></svg>
<svg style="left:1246.40px;top:356.30px" width="10" height="10" viewBox="0 0 10 10"><path d="M3.54,1.55 A3.7,3.7 0 1 1 2.07,7.02" fill="none" stroke="#000" stroke-width="1.6"/><rect x="0.4" y="0.9" width="3.2" height="2.3" fill="#000"/><path d="M4.3,6.1 L5.4,3.8" stroke="#000" stroke-width="1.1"/></svg>
<svg style="left:1267.80px;top:356.20px" width="10" height="10" viewBox="0 0 10 10"><circle cx="4.8" cy="4.8" r="3.9" fill="none" stroke="#fff" stroke-width="1.5"/><path d="M2.1,7.5 L7.5,2.1" stroke="#fff" stroke-width="1.5"/></svg>
<svg style="left:26.00px;top:387.25px" width="9.5" height="8" viewBox="0 0 9.5 8"><rect x="0" y="0.2" width="9.2" height="1.6" rx="0.6" fill="#111"/><rect x="0" y="3.2" width="9.2" height="1.6" rx="0.6" fill="#111"/><rect x="0" y="6.2" width="9.2" height="1.6" rx="0.6" fill="#111"/></svg>
<svg style="left:53.00px;top:386.05px" width="10" height="10" viewBox="0 0 10 10"><rect x="0.6" y="0.6" width="8.80" height="8.80" rx="0.8" fill="#fff" stroke="#555" stroke-width="1.1"/></svg>
<svg style="left:377.90px;top:386.75px" width="12.5" height="9" viewBox="0 0 12.5 9"><rect x="0" y="0" width="12.2" height="8.8" rx="1.2" fill="#000"/><circle cx="3.6" cy="3.2" r="1.4" fill="#fff"/><path d="M1.3,7.2 C1.3,5.4 2.3,4.8 3.6,4.8 C4.9,4.8 5.9,5.4 5.9,7.2 Z" fill="#fff"/><rect x="7.0" y="2.2" width="3.6" height="4.8" fill="#888"/><rect x="7.0" y="3.7" width="3.6" height="0.6" fill="#000"/><rect x="7.0" y="5.2" width="3.6" height="0.6" fill="#000"/></svg>
<svg style="left:1005.80px;top:387.35px" width="8.4" height="8.4" viewBox="0 0 8.4 8.4"><rect x="0.6" y="0.6" width="7.20" height="7.20" rx="0.8" fill="#fff" stroke="#555" stroke-width="1.1"/></svg>
<svg style="left:1224.60px;top:391.05px" width="10.5" height="10.5" viewBox="0 0 10.5 10.5"><g transform="scale(0.95)"><path d="M3.2,6.8 L8.0,2.0" stroke="#fff" stroke-width="3.1" stroke-linecap="round"/><path d="M0.3,9.7 L1.55,6.15 L3.85,8.45 Z" fill="#fff"/><path d="M1.9,6.0 L4.0,8.1" stroke="#1492dc" stroke-width="0.35" opacity="0.7"/></g></svg>
<svg style="left:1246.40px;top:391.15px" width="10" height="10" viewBox="0 0 10 10"><path d="M3.54,1.55 A3.7,3.7 0 1 1 2.07,7.02" fill="none" stroke="#000" stroke-width="1.6"/><rect x="0.4" y="0.9" width="3.2" height="2.3" fill="#000"/><path d="M4.3,6.1 L5.4,3.8" stroke="#000" stroke-width="1.1"/></svg>
<svg style="left:1267.80px;top:391.05px" width="10" height="10" viewBox="0 0 10 10"><circle cx="4.8" cy="4.8" r="3.9" fill="none" stroke="#fff" stroke-width="1.5"/><path d="M2.1,7.5 L7.5,2.1" stroke="#fff" stroke-width="1.5"/></svg>
<svg style="left:26.00px;top:422.05px" width="9.5" height="8" viewBox="0 0 9.5 8"><rect x="0" y="0.2" width="9.2" height="1.6" rx="0.6" fill="#111"/><rect x="0" y="3.2" width="9.2" height="1.6" rx="0.6" fill="#111"/><rect x="0" y="6.2" width="9.2" height="1.6" rx="0.6" fill="#111"/></svg>
<svg style="left:53.00px;top:420.85px" width="10" height="10" viewBox="0 0 10 10"><rect x="0.6" y="0.6" width="8.80" height="8.80" rx="0.8" fill="#fff" stroke="#555" stroke-width="1.1"/><path d="M2.2,5.2 L4.2,7.0 L7.8,3.0" fill="none" stroke="#444" stroke-width="1.1"/></svg>
<svg style="left:377.90px;top:421.55px" width="12.5" height="9" viewBox="0 0 12.5 9"><rect x="0" y="0" width="12.2" height="8.8" rx="1.2" fill="#000"/><circle cx="3.6" cy="3.2" r="1.4" fill="#fff"/><path d="M1.3,7.2 C1.3,5.4 2.3,4.8 3.6,4.8 C4.9,4.8 5.9,5.4 5.9,7.2 Z" fill="#fff"/><rect x="7.0" y="2.2" width="3.6" height="4.8" fill="#888"/><rect x="7.0" y="3.7" width="3.6" height="0.6" fill="#000"/><rect x="7.0" y="5.2" width="3.6" height="0.6" fill="#000"/></svg>
<svg style="left:1005.80px;top:422.15px" width="8.4" height="8.4" viewBox="0 0 8.4 8.4"><rect x="0.6" y="0.6" width="7.20" height="7.20" rx="0.8" fill="#fff" stroke="#555" stroke-width="1.1"/></svg>
<svg style="left:1224.60px;top:425.85px" width="10.5" height="10.5" viewBox="0 0 10.5 10.5"><g transform="scale(0.95)"><path d="M3.2,6.8 L8.0,2.0" stroke="#fff" stroke-width="3.1" stroke-linecap="round"/><path d="M0.3,9.7 L1.55,6.15 L3.85,8.45 Z" fill="#fff"/><path d="M1.9,6.0 L4.0,8.1" stroke="#1492dc" stroke-width="0.35" opacity="0.7"/></g></svg>
<svg style="left:1246.40px;top:425.95px" width="10" height="10" viewBox="0 0 10 10"><path d="M3.54,1.55 A3.7,3.7 0 1 1 2.07,7.02" fill="none" stroke="#000" stroke-width="1.6"/><rect x="0.4" y="0.9" width="3.2" height="2.3" fill="#000"/><path d="M4.3,6.1 L5.4,3.8" stroke="#000" stroke-width="1.1"/></svg>
<svg style="left:1267.80px;top:425.85px" width="10" height="10" viewBox="0 0 10 10"><circle cx="4.8" cy="4.8" r="3.9" fill="none" stroke="#fff" stroke-width="1.5"/><path d="M2.1,7.5 L7.5,2.1" stroke="#fff" stroke-width="1.5"/></svg>
<svg style="left:26.00px;top:456.50px" width="9.5" height="8" viewBox="0 0 9.5 8"><rect x="0" y="0.2" width="9.2" height="1.6" rx="0.6" fill="#111"/><rect x="0" y="3.2" width="9.2" height="1.6" rx="0.6" fill="#111"/><rect x="0" y="6.2" width="9.2" height="1.6" rx="0.6" fill="#111"/></svg>
<svg style="left:53.00px;top:455.30px" width="10" height="10" viewBox="0 0 10 10"><rect x="0.6" y="0.6" width="8.80" height="8.80" rx="0.8" fill="#fff" stroke="#555" stroke-width="1.1"/><path d="M2.2,5.2 L4.2,7.0 L7.8,3.0" fill="none" stroke="#444" stroke-width="1.1"/></svg>
<svg style="left:377.90px;top:456.00px" width="12.5" height="9" viewBox="0 0 12.5 9"><rect x="0" y="0" width="12.2" height="8.8" rx="1.2" fill="#000"/><circle cx="3.6" cy="3.2" r="1.4" fill="#fff"/><path d="M1.3,7.2 C1.3,5.4 2.3,4.8 3.6,4.8 C4.9,4.8 5.9,5.4 5.9,7.2 Z" fill="#fff"/><rect x="7.0" y="2.2" width="3.6" height="4.8" fill="#888"/><rect x="7.0" y="3.7" width="3.6" height="0.6" fill="#000"/><rect x="7.0" y="5.2" width="3.6" height="0.6" fill="#000"/></svg>
<svg style="left:1005.80px;top:456.60px" width="8.4" height="8.4" viewBox="0 0 8.4 8.4"><rect x="0.6" y="0.6" width="7.20" height="7.20" rx="0.8" fill="#fff" stroke="#555" stroke-width="1.1"/></svg>
<svg style="left:1224.60px;top:460.30px" width="10.5" height="10.5" viewBox="0 0 10.5 10.5"><g transform="scale(0.95)"><path d="M3.2,6.8 L8.0,2.0" stroke="#fff" stroke-width="3.1" stroke-linecap="round"/><path d="M0.3,9.7 L1.55,6.15 L3.85,8.45 Z" fill="#fff"/><path d="M1.9,6.0 L4.0,8.1" stroke="#1492dc" stroke-width="0.35" opacity="0.7"/></g></svg>
<svg style="left:1246.40px;top:460.40px" width="10" height="10" viewBox="0 0 10 10"><path d="M3.54,1.55 A3.7,3.7 0 1 1 2.07,7.02" fill="none" stroke="#000" stroke-width="1.6"/><rect x="0.4" y="0.9" width="3.2" height="2.3" fill="#000"/><path d="M4.3,6.1 L5.4,3.8" stroke="#000" stroke-width="1.1"/></svg>
<svg style="left:1267.80px;top:460.30px" width="10" height="10" viewBox="0 0 10 10"><circle cx="4.8" cy="4.8" r="3.9" fill="none" stroke="#fff" stroke-width="1.5"/><path d="M2.1,7.5 L7.5,2.1" stroke="#fff" stroke-width="1.5"/></svg>
<svg style="left:26.20px;top:536.60px" width="11.5" height="11.5" viewBox="0 0 11.5 11.5"><rect x="0.6" y="0.6" width="7.6" height="7.2" rx="1" fill="none" stroke="#fff" stroke-width="1.1"/><rect x="2.9" y="2.7" width="7.8" height="7.8" rx="1" fill="#19a3b6" stroke="#fff" stroke-width="1.2"/></svg>
<svg style="left:88.90px;top:537.00px" width="12" height="11" viewBox="0 0 12 11"><path d="M0,0.5 L6.4,0.5 L6.4,3.2 L3.4,3.2 L3.4,9.6 L0,9.6 Z" fill="#fff"/><path d="M4.3,4.0 L8.5,4.0 L11,6.5 L11,10.6 L4.3,10.6 Z" fill="none" stroke="#fff" stroke-width="1.2"/><path d="M8.3,4.0 L8.3,6.7 L11,6.7" fill="none" stroke="#fff" stroke-width="1"/></svg>
<svg style="left:312.90px;top:536.30px" width="12.5" height="11" viewBox="0 0 12.5 11"><rect x="1.6" y="1.6" width="9" height="7.6" fill="none" stroke="#fff" stroke-width="1.1"/><rect x="0" y="0" width="3" height="3" fill="#fff"/><rect x="9.2" y="0" width="3" height="3" fill="#fff"/><rect x="0" y="7.8" width="3" height="3" fill="#fff"/><rect x="9.2" y="7.8" width="3" height="3" fill="#fff"/><rect x="3.8" y="3.6" width="3.2" height="2.4" fill="none" stroke="#fff" stroke-width="0.9"/><rect x="5.6" y="4.8" width="3.2" height="2.4" fill="none" stroke="#fff" stroke-width="0.9"/></svg>
<svg style="left:393.60px;top:536.30px" width="13.5" height="11" viewBox="0 0 13.5 11"><rect x="1.4" y="1.4" width="6.4" height="5" fill="none" stroke="#fff" stroke-width="1.1"/><rect x="0" y="0" width="2.6" height="2.6" fill="#fff"/><rect x="6.6" y="0" width="2.6" height="2.6" fill="#fff"/><rect x="0" y="5.4" width="2.6" height="2.6" fill="#fff"/><rect x="5.2" y="4.6" width="6.4" height="5" fill="none" stroke="#fff" stroke-width="1.1"/><rect x="10.4" y="3.4" width="2.6" height="2.6" fill="#fff"/><rect x="4.2" y="8.4" width="2.6" height="2.6" fill="#fff"/><rect x="10.4" y="8.4" width="2.6" height="2.6" fill="#fff"/></svg>
<svg style="left:1005.60px;top:534.90px" width="10" height="9" viewBox="0 0 10 9"><path d="M0.6,0.6 L7.0,0.6 L9.2,2.8 L9.2,8.4 L0.6,8.4 Z" fill="none" stroke="#fff" stroke-width="1.2"/><rect x="2.4" y="0.6" width="4" height="2.6" fill="none" stroke="#fff" stroke-width="1"/><rect x="2.2" y="5.4" width="5.4" height="1.6" fill="#fff"/></svg>
<svg style="left:1144.00px;top:535.50px" width="10" height="9" viewBox="0 0 10 9"><path d="M1.15,4.3 A3.55,3.35 0 0 1 7.6,2.3" fill="none" stroke="#fff" stroke-width="1.8"/><path d="M5.4,3.6 L9.4,3.6 L9.4,-0.2 Z" fill="#fff"/><path d="M8.25,4.5 A3.55,3.35 0 0 1 1.8,6.5" fill="none" stroke="#fff" stroke-width="1.8"/><path d="M4.0,5.2 L0.0,5.2 L0.0,9.0 Z" fill="#fff"/></svg>
<svg style="left:963.00px;top:282.40px" width="12" height="16" viewBox="0 0 12 16"><path d="M0.5,0.5 L0.5,12.5 L3.4,9.8 L5.4,14.5 L7.2,13.7 L5.3,9.1 L9.2,9.1 Z" fill="none" stroke="#333" stroke-width="0.8"/></svg>
</body></html>
